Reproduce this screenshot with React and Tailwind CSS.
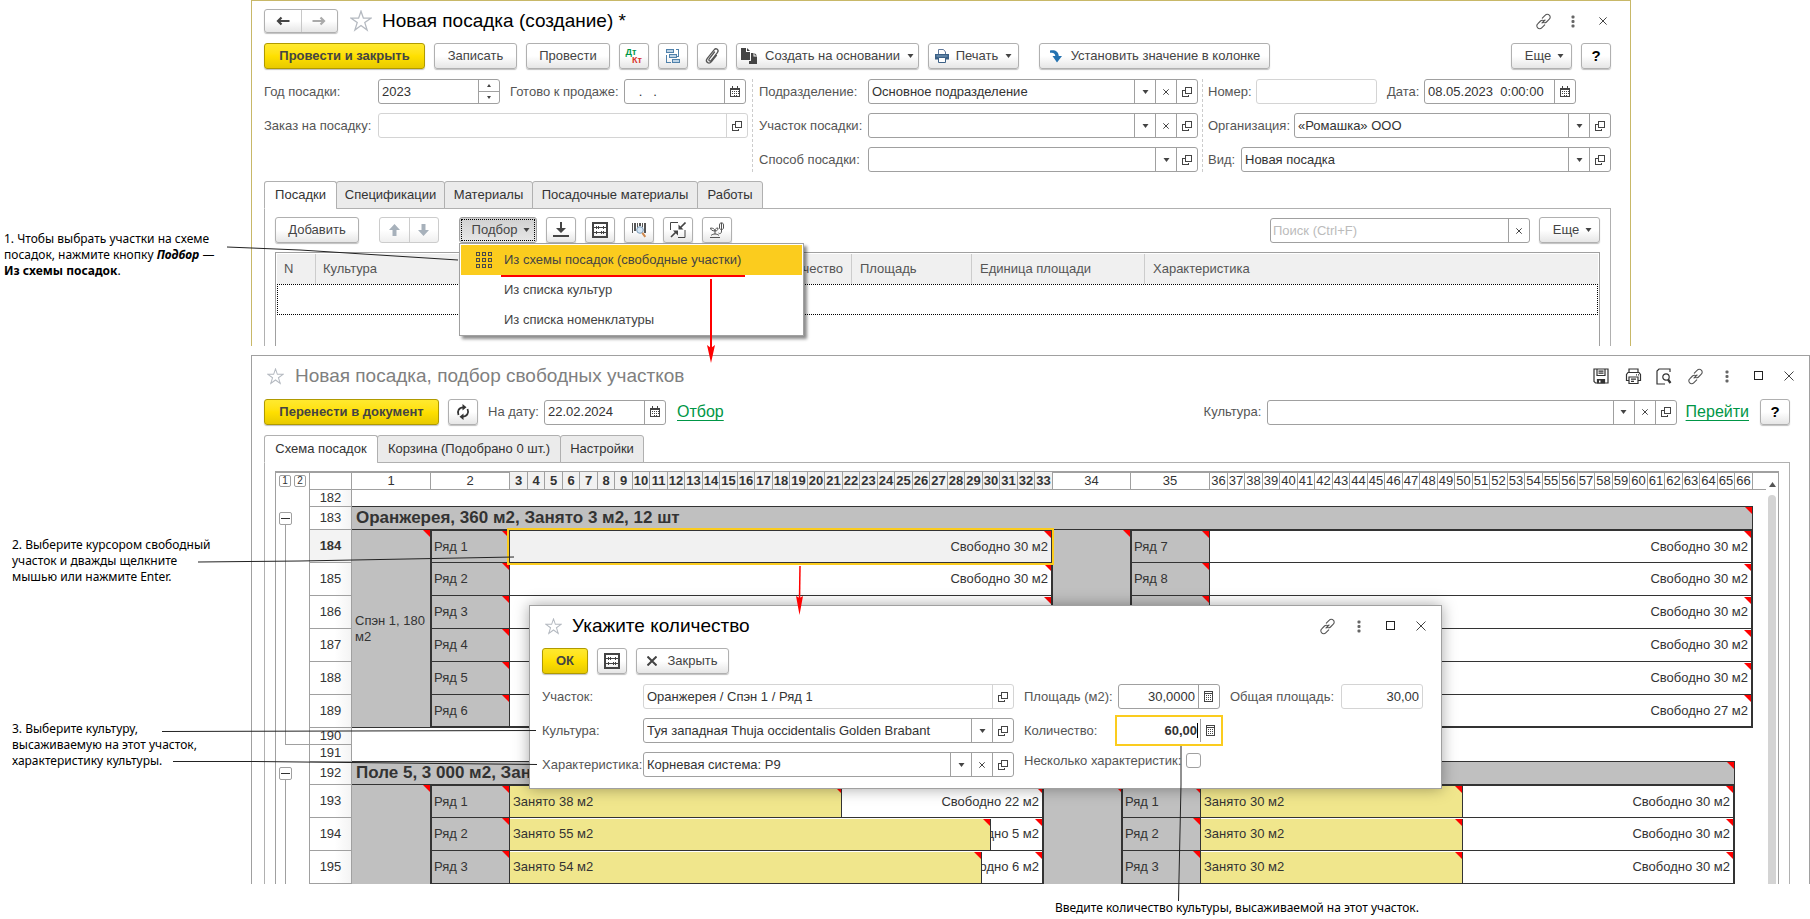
import { useState } from 'react'
import clsx from 'clsx'

/* ---------- icons ---------- */

function Caret({ className }) {
  return (
    <svg width="7" height="4" viewBox="0 0 7 4" className={className} aria-hidden="true">
      <path d="M0.5 0h6L3.5 4z" fill="currentColor" />
    </svg>
  )
}

function OpenIcon() {
  return (
    <svg width="12" height="12" viewBox="0 0 12 12" fill="none" stroke="#444" shapeRendering="crispEdges">
      <rect x="4.5" y="1.5" width="6" height="6" />
      <path d="M3.500 4.500H1.500v6h6V8.500" />
    </svg>
  )
}

function CalendarIcon() {
  return (
    <svg width="11" height="12" viewBox="0 0 11 12" shapeRendering="crispEdges">
      <rect x="0.5" y="2.5" width="9" height="8" fill="none" stroke="#444" />
      <path d="M0 2h10v2H0zM2 0h1v2H2zM7 0h1v2H7z" fill="#444" />
      <path d="M2 5h1v1H2zM4 5h1v1H4zM6 5h1v1H6zM8 5h1v1H8zM2 7h1v1H2zM4 7h1v1H4zM6 7h1v1H6zM8 7h1v1H8zM4 9h1v1H4zM6 9h1v1H6z" fill="#444" />
    </svg>
  )
}

function CalcIcon() {
  return (
    <svg width="11" height="12" viewBox="0 0 11 12" shapeRendering="crispEdges">
      <rect x="0.500" y="0.500" width="8" height="10" fill="none" stroke="#444" />
      <path d="M0 2h9v1H0zM2 4h1v1H2zM4 4h1v1H4zM6 4h1v1H6zM2 6h1v1H2zM4 6h1v1H4zM6 6h1v1H6zM2 8h1v1H2zM4 8h1v1H4zM6 8h1v1H6z" fill="#444" />
    </svg>
  )
}

function CrossIcon({ size = 6, width = 1 }) {
  return (
    <svg width={size} height={size} viewBox="0 0 10 10" stroke="#444" strokeWidth={(width * 10) / size}>
      <path d="M0.5 0.5l9 9M9.500 0.500l-9 9" />
    </svg>
  )
}

function StarIcon({ size = 20 }) {
  return (
    <svg width={size} height={size} viewBox="0 0 22 22" fill="none" stroke="#b4b9c0" strokeWidth="1.300">
      <path d="M11 1.200l2.400 7h7.400l-6 4.400 2.300 7.400-6.100-4.500-6.100 4.500 2.300-7.400-6-4.400h7.400z" />
    </svg>
  )
}

function LinkIcon() {
  return (
    <svg width="17" height="17" viewBox="0 0 17 17" fill="none" stroke="#555" strokeWidth="1.100" strokeLinecap="round">
      <path d="M7.300 5.200l3-3a2.700 2.700 0 0 1 4 0 2.700 2.700 0 0 1 0 4l-2.800 2.800a2.700 2.700 0 0 1-3 .5" />
      <path d="M9.700 11.800l-3 3a2.700 2.700 0 0 1-4 0 2.700 2.700 0 0 1 0-4l2.800-2.800a2.700 2.700 0 0 1 3-.5" />
      <path d="M7 10l3-3" />
    </svg>
  )
}

function DotsIcon() {
  return (
    <svg width="4" height="13" viewBox="0 0 4 13" fill="#666">
      <rect x="0.500" y="0.500" width="3" height="3" rx="1" />
      <rect x="0.500" y="5" width="3" height="3" rx="1" />
      <rect x="0.500" y="9.500" width="3" height="3" rx="1" />
    </svg>
  )
}

function SquareIcon() {
  return (
    <svg width="10" height="10" viewBox="0 0 10 10" shapeRendering="crispEdges">
      <rect x="0.500" y="0.500" width="8" height="8" fill="none" stroke="#222" />
    </svg>
  )
}

function SaveIcon() {
  return (
    <svg width="16" height="16" viewBox="0 0 16 16" fill="none" stroke="#333" strokeWidth="1.200">
      <path d="M1 1h14v14H2.500L1 13.500z" />
      <path d="M4 1v6.500h8V1M5.500 3.200h5M5.500 5.200h5" />
      <path d="M4.500 11.500h7V15h-7z" fill="#333" />
      <path d="M6 12.500h1.500v2H6z" fill="#fff" stroke="none" />
    </svg>
  )
}

function PrinterIcon() {
  return (
    <svg width="17" height="17" viewBox="0 0 17 17" fill="none" stroke="#333" strokeWidth="1.200">
      <path d="M4 4.500V1h9v3.500M4 12.500H1.500v-6l1.500-2h11l1.500 2v6H13" />
      <path d="M4 9h9v6.500H4zM6 11.200h5M6 13.300h3M11 6.800h1M13 6.800h1" />
    </svg>
  )
}

function PreviewIcon() {
  return (
    <svg width="16" height="17" viewBox="0 0 16 17" fill="none" stroke="#333" strokeWidth="1.200">
      <path d="M14 4V1H3L1 3v13h8" />
      <circle cx="10" cy="9" r="3.200" />
      <path d="M12 11.500l2.500 3.500" strokeWidth="2.200" />
    </svg>
  )
}

function ArrowIcon({ dir, color = '#444' }) {
  const turn = { left: 0, up: 90, right: 180, down: 270 }[dir]
  return (
    <svg width="14" height="12" viewBox="0 0 14 12">
      <path
        d="M5.500 2.500L2 6l3.500 3.500M2 6h11.500"
        fill="none"
        stroke={color}
        strokeWidth="2.200"
        transform={`rotate(${turn} 7 6)`}
      />
    </svg>
  )
}

function FatArrow({ down }) {
  return (
    <svg width="11" height="12" viewBox="0 0 11 12" fill="#a7b1bb">
      <path d={down ? 'M3.500 0h4v6H11L5.500 12 0 6h3.500z' : 'M5.500 0L11 6H7.500v6h-4V6H0z'} />
    </svg>
  )
}

function DtKtIcon() {
  return (
    <span className="flex flex-col text-[9px] leading-[8px] font-bold" aria-hidden="true">
      <span className="pr-1.5 text-[#009646]">Дт</span>
      <span className="pl-1.5 text-[#d8322c]">Кт</span>
    </span>
  )
}

function StructureIcon() {
  return (
    <svg width="16" height="16" viewBox="0 0 16 16" fill="#bcd3e6" stroke="#4f81ab" shapeRendering="crispEdges">
      <rect x="1.500" y="1.500" width="7" height="3" />
      <rect x="4.500" y="6.500" width="7" height="3" />
      <rect x="7.500" y="11.500" width="7" height="3" />
      <path d="M10.500 1.500h3v7M1.500 6.500v8h4M13.500 8.500h-2" fill="none" />
    </svg>
  )
}

function ClipIcon() {
  return (
    <svg width="16" height="18" viewBox="0 0 16 18" fill="none" stroke="#555" strokeWidth="1.300" strokeLinecap="round">
      <path d="M10.500 5L5.200 11.800c-1.200 1.600.8 3 2 1.600l6.200-7.800c2-2.600-1.200-5.200-3.300-2.700L3.300 11.300c-2.600 3.400 1.500 6.600 4.200 3.300l5-6.200" />
    </svg>
  )
}

function CopyIcon() {
  return (
    <svg width="17" height="16" viewBox="0 0 17 16" fill="#444">
      <path d="M0 0h5v4h4v8H0z" />
      <path d="M6 0l3 3H6z" />
      <path d="M10 5h2.500v3.500H16V16H8v-3h2z" />
      <path d="M13.500 5l2.500 2.500h-2.500z" />
    </svg>
  )
}

function PrintColorIcon() {
  return (
    <svg width="14" height="14" viewBox="0 0 14 14">
      <path d="M3.500 5V0.500h5L10.500 3v2" fill="#fff" stroke="#60789a" />
      <path d="M0 5h14v5.500H0z" fill="#3c6186" />
      <path d="M1.500 6.500h11v1h-11z" fill="#83a6c6" />
      <path d="M3.500 8.500h7v5h-7z" fill="#fff" stroke="#3c6186" />
    </svg>
  )
}

function TurnIcon() {
  return (
    <svg width="14" height="14" viewBox="0 0 14 14">
      <path d="M1 1.500C5.500.5 9.500 2 9.800 7H13L8 13.500 3.500 7h2.800C6.200 4.500 4.500 3.200 1 3.800z" fill="#2472b0" />
    </svg>
  )
}

function DownloadIcon() {
  return (
    <svg width="16" height="16" viewBox="0 0 16 16" fill="#444">
      <path d="M7 0h2v6h4l-5 5-5-5h4zM0 13h16v2H0z" />
    </svg>
  )
}

function AbacusIcon() {
  return (
    <svg width="16" height="16" viewBox="0 0 16 16" shapeRendering="crispEdges">
      <rect x="1" y="1" width="14" height="14" fill="none" stroke="#444" strokeWidth="2" />
      <path d="M2 5h12v1H2zM2 10h12v1H2zM4 4h1v3H4zM6 4h1v3H6zM11 4h1v3h-1zM4 9h1v3H4zM9 9h1v3H9zM11 9h1v3h-1z" fill="#444" />
    </svg>
  )
}

function BarcodeIcon() {
  return (
    <svg width="16" height="16" viewBox="0 0 16 16">
      <path d="M1 1h1v10H1zM3 1h2v8H3zM6 1h1v5H6zM8 1h2v3H8zM11 1h1v4h-1zM13 1h2v10h-2z" fill="#555" shapeRendering="crispEdges" />
      <circle cx="9" cy="8" r="3.300" fill="#d5e6f5" stroke="#7d9db8" />
      <path d="M11.300 10.800l3 4" stroke="#d08a4e" strokeWidth="2" />
    </svg>
  )
}

function CollapseIcon() {
  return (
    <svg width="16" height="16" viewBox="0 0 16 16" fill="none" stroke="#444">
      <path d="M8 0.500H0.500V8M8 15.500h7V8" />
      <path d="M15.500 0.500L10 6M1 15l5.500-5.500" strokeWidth="1.600" />
      <path d="M8.500 2.500v5h5zM3 8.500h5v5z" fill="#444" stroke="none" />
    </svg>
  )
}

function PlantIcon() {
  return (
    <svg width="16" height="16" viewBox="0 0 16 16" fill="none" stroke="#555">
      <path d="M1 15.500h10M2 13.500c2-2 6-2 8 0M6 12V9M6 9C3 9 1.500 7.500 1.500 6 4 6 6 7 6 9zM6 9c0-2 1-3 3-3 0 2-1 3-3 3zM12.500 9V1" />
      <path d="M10.500 6V3c0-3 4-3 4 0v3c0 2-4 2-4 0zM12.500 9c0 3-2 3-3 2" />
    </svg>
  )
}

function GridIcon() {
  const cells = [1, 7, 13]
  return (
    <svg width="17" height="17" viewBox="0 0 17 17" fill="none" stroke="#4a4a4a" shapeRendering="crispEdges">
      {cells.map(y => cells.map(x => (
        <rect key={`${x}-${y}`} x={x - 0.5} y={y - 0.5} width="3" height="3" />
      )))}
    </svg>
  )
}

function RefreshIcon() {
  return (
    <svg width="14" height="16" viewBox="0 0 14 16" fill="none" stroke="#333" strokeWidth="1.800">
      <path d="M2.500 11C.8 7 3 3.300 7.500 3.300M11.500 5c1.700 4-.5 7.700-5 7.700" />
      <path d="M6.500 0l4 3.300-4 3.300zM7.500 9.400l-4 3.300 4 3.300z" fill="#333" stroke="none" />
    </svg>
  )
}

/* ---------- controls ---------- */

function Btn({ className, primary, children, ...rest }) {
  return (
    <button
      type="button"
      className={clsx(
        'flex h-[26px] shrink-0 items-center justify-center rounded-[3px] border whitespace-nowrap shadow-[0_1px_1px_rgba(0,0,0,0.25)]',
        primary
          ? 'border-[#b09a00] bg-linear-to-b from-[#ffe92e] via-[#ffe000] to-[#e8ca00] font-bold text-[#444]'
          : 'border-[#b0b0b0] bg-linear-to-b from-white from-50% to-[#e6e6e6] text-[#444]',
        className,
      )}
      {...rest}
    >
      {children}
    </button>
  )
}

const ADDONS = {
  list: { label: 'Выбрать из списка', icon: <Caret /> },
  clear: { label: 'Очистить', icon: <CrossIcon /> },
  open: { label: 'Открыть', icon: <OpenIcon /> },
  date: { label: 'Календарь', icon: <CalendarIcon /> },
  calc: { label: 'Калькулятор', icon: <CalcIcon /> },
}

function Field({ id, label, labelClass, value = '', addons = [], disabled, boxClass, inputClass, focused, children }) {
  const [text, setText] = useState(value)
  const line = disabled ? 'border-[#d4d4d4]' : 'border-[#a0a0a0]'
  return (
    <div className="flex h-[25px] w-full min-w-0 items-center">
      <label htmlFor={id} className={clsx('shrink-0 whitespace-nowrap text-[#555]', labelClass)}>{label}</label>
      <div
        className={clsx(
          'flex min-w-0 items-stretch bg-white',
          focused ? 'h-[31px] border-2 border-[#fbcc1e] py-0.5' : ['h-[25px] rounded-[3px] border', line],
          boxClass || 'flex-1',
        )}
      >
        <input
          id={id}
          value={text}
          readOnly={disabled}
          onChange={e => setText(e.target.value)}
          className={clsx('w-full min-w-0 flex-1 bg-transparent px-[3px] text-[#333] outline-none', inputClass)}
        />
        {focused && <span className="w-px self-center bg-black h-[15px]" />}
        {focused && <span className="w-0.5" />}
        {addons.map(a => (
          <button
            key={a}
            type="button"
            aria-label={ADDONS[a].label}
            className={clsx('flex w-[21px] shrink-0 items-center justify-center border-l text-[#444]', line)}
          >
            {ADDONS[a].icon}
          </button>
        ))}
        {children}
      </div>
    </div>
  )
}

function Tabs({ items }) {
  return (
    <div role="tablist" className="relative -mb-px flex">
      {items.map(([name, width], i) => (
        <button
          key={name}
          type="button"
          role="tab"
          aria-selected={i === 0}
          className={clsx(
            'h-[28px] rounded-t-[3px] border border-[#b0b0b0] text-center whitespace-nowrap text-[#333]',
            i === 0 ? 'border-b-white bg-white' : '-ml-px bg-[#ebebeb]',
            width,
          )}
        >
          {name}
        </button>
      ))}
    </div>
  )
}

function IconButton({ label, children, className }) {
  return (
    <button type="button" aria-label={label} className={clsx('flex h-5 items-center justify-center', className)}>
      {children}
    </button>
  )
}

/* ---------- document form ---------- */

function PickMenu() {
  const items = ['Из схемы посадок (свободные участки)', 'Из списка культур', 'Из списка номенклатуры']
  return (
    <div
      role="menu"
      className="absolute top-[26px] left-0 z-20 w-[345px] border border-[#a0a0a0] bg-white px-px pt-px shadow-[3px_3px_3px_rgba(0,0,0,0.45)]"
    >
      {items.map((item, i) => (
        <button
          key={item}
          type="button"
          role="menuitem"
          className={clsx(
            'flex h-[30px] w-full items-center text-left whitespace-nowrap text-[#444]',
            i === 0 && 'bg-[#fbcc1e]',
          )}
        >
          <span className="flex w-[43px] justify-center pl-1">{i === 0 && <GridIcon />}</span>
          {item}
        </button>
      ))}
    </div>
  )
}

function DocumentWindow() {
  return (
    <section className="mr-[179px] min-w-0 flex-1 border border-b-0 border-[#c8b868] bg-white pt-2 pr-[19px] pl-3">
      <header className="flex h-6 items-center">
        <div className="flex h-6 w-[74px] rounded-[3px] border border-[#b0b0b0] bg-linear-to-b from-white from-50% to-[#e6e6e6] shadow-[0_1px_1px_rgba(0,0,0,0.25)]">
          <button type="button" aria-label="Назад" className="flex flex-1 items-center justify-center">
            <ArrowIcon dir="left" />
          </button>
          <button type="button" aria-label="Вперед" className="flex flex-1 items-center justify-center border-l border-[#c8c8c8]">
            <ArrowIcon dir="right" color="#aaa" />
          </button>
        </div>
        <IconButton label="В избранное" className="ml-3"><StarIcon size={22} /></IconButton>
        <h1 className="ml-2.5 text-[19px] leading-6 text-black">Новая посадка (создание) *</h1>
        <IconButton label="Ссылка" className="ml-auto w-5"><LinkIcon /></IconButton>
        <IconButton label="Меню" className="ml-3 w-4"><DotsIcon /></IconButton>
        <IconButton label="Закрыть" className="ml-3.5 w-4"><CrossIcon size={8} /></IconButton>
      </header>

      <div className="mt-2.5 flex">
        <Btn primary className="w-[161px]">Провести и закрыть</Btn>
        <Btn className="ml-[9px] w-[83px]">Записать</Btn>
        <Btn className="ml-[9px] w-[84px]">Провести</Btn>
        <Btn className="ml-[9px] w-[30px]" aria-label="Проводки"><DtKtIcon /></Btn>
        <Btn className="ml-[9px] w-[30px]" aria-label="Структура"><StructureIcon /></Btn>
        <Btn className="ml-[9px] w-[30px]" aria-label="Файлы"><ClipIcon /></Btn>
        <Btn className="ml-[9px] w-[183px] gap-[7px]"><CopyIcon />Создать на основании<Caret /></Btn>
        <Btn className="ml-[9px] w-[91px] gap-[7px]"><PrintColorIcon />Печать<Caret /></Btn>
        <Btn className="ml-5 w-[231px] gap-2"><TurnIcon />Установить значение в колонке</Btn>
        <Btn className="ml-auto w-[61px] gap-1.5 pl-1.5">Еще<Caret /></Btn>
        <Btn className="ml-[9px] w-[30px] text-[15px] font-bold text-black">?</Btn>
      </div>

      <div className="mt-2.5 grid grid-cols-[484fr_446fr_409fr] gap-x-1">
        <div className="flex flex-col gap-[9px]">
          <div className="flex">
            <div className="flex w-[236px]">
              <Field id="year" label="Год посадки:" labelClass="w-[114px]" value="2023">
                <span className="flex w-[21px] shrink-0 flex-col border-l border-[#a0a0a0]">
                  <button type="button" aria-label="Больше" className="flex flex-1 items-center justify-center">
                    <svg width="4" height="3"><path d="M2 0l2 3H0z" fill="#444" /></svg>
                  </button>
                  <button type="button" aria-label="Меньше" className="flex flex-1 items-center justify-center border-t border-[#a0a0a0]">
                    <svg width="4" height="3"><path d="M0 0h4L2 3z" fill="#444" /></svg>
                  </button>
                </span>
              </Field>
            </div>
            <div className="ml-2.5 flex w-[236px]">
              <Field id="ready" label="Готово к продаже:" labelClass="w-[114px]" value="   .   ." addons={['date']} />
            </div>
          </div>
          <Field id="order" label="Заказ на посадку:" labelClass="w-[114px]" addons={['open']} disabled />
        </div>
        <div className="flex flex-col gap-[9px] border-l border-dashed border-[#ccc] pl-1.5">
          <Field id="dept" label="Подразделение:" labelClass="w-[109px]" value="Основное подразделение" addons={['list', 'clear', 'open']} />
          <Field id="plot" label="Участок посадки:" labelClass="w-[109px]" addons={['list', 'clear', 'open']} />
          <Field id="way" label="Способ посадки:" labelClass="w-[109px]" addons={['list', 'open']} />
        </div>
        <div className="flex flex-col gap-[9px] border-l border-dashed border-[#ccc] pl-[5px]">
          <div className="flex">
            <div className="flex w-[169px]">
              <Field id="number" label="Номер:" labelClass="w-[48px]" disabled />
            </div>
            <div className="ml-2.5 flex w-[189px]">
              <Field id="date" label="Дата:" labelClass="w-[37px]" value="08.05.2023  0:00:00" inputClass="whitespace-pre" addons={['date']} />
            </div>
          </div>
          <Field id="org" label="Организация:" labelClass="w-[86px]" value="«Ромашка» ООО" addons={['list', 'open']} />
          <Field id="kind" label="Вид:" labelClass="w-[33px]" value="Новая посадка" addons={['list', 'open']} />
        </div>
      </div>

      <div className="mt-[9px]">
        <Tabs
          items={[
            ['Посадки', 'w-[73px]'],
            ['Спецификации', 'w-[109px]'],
            ['Материалы', 'w-[89px]'],
            ['Посадочные материалы', 'w-[166px]'],
            ['Работы', 'w-[66px]'],
          ]}
        />
      </div>
      <div className="border border-b-0 border-[#b0b0b0] px-2.5 pt-2">
        <div className="flex">
          <Btn className="w-[84px]">Добавить</Btn>
          <div className="ml-5 flex h-[26px] w-[60px] rounded-[3px] border border-[#ccc] bg-linear-to-b from-white from-50% to-[#efefef]">
            <button type="button" aria-label="Вверх" className="flex flex-1 items-center justify-center"><FatArrow /></button>
            <button type="button" aria-label="Вниз" className="flex flex-1 items-center justify-center border-l border-[#ccc]"><FatArrow down /></button>
          </div>
          <div className="relative ml-5">
            <button
              type="button"
              aria-haspopup="menu"
              aria-expanded="true"
              className="flex h-[26px] w-[78px] rounded-[3px] border border-[#a0a0a0] bg-linear-to-b from-[#d0d0d0] to-[#e8e8e8] p-px text-[#444]"
            >
              <span className="flex h-full flex-1 items-center justify-center gap-1.5 border border-dotted border-black pl-1.5">
                Подбор<Caret />
              </span>
            </button>
            <PickMenu />
          </div>
          <Btn className="ml-[9px] w-[30px]" aria-label="Загрузить"><DownloadIcon /></Btn>
          <Btn className="ml-[9px] w-[30px]" aria-label="Рассчитать"><AbacusIcon /></Btn>
          <Btn className="ml-[9px] w-[30px]" aria-label="Штрихкод"><BarcodeIcon /></Btn>
          <Btn className="ml-[9px] w-[30px]" aria-label="Свернуть"><CollapseIcon /></Btn>
          <Btn className="ml-[9px] w-[30px]" aria-label="Растения"><PlantIcon /></Btn>
          <div className="ml-auto flex h-[25px] w-[260px] self-end rounded-[3px] border border-[#a0a0a0]">
            <input
              type="text"
              aria-label="Поиск"
              placeholder="Поиск (Ctrl+F)"
              className="min-w-0 flex-1 px-0.5 outline-none placeholder:text-[#bbb]"
            />
            <button type="button" aria-label="Очистить поиск" className="flex w-[21px] items-center justify-center border-l border-[#a0a0a0]">
              <CrossIcon />
            </button>
          </div>
          <Btn className="ml-[9px] w-[61px] gap-1.5 pl-1.5">Еще<Caret /></Btn>
        </div>

        <div className="mt-[9px] h-[94px] border border-b-0 border-[#a0a0a0] p-px pb-0">
          <table className="w-full table-fixed border-separate border-spacing-0 text-left text-[#555]">
            <thead>
              <tr className="h-[30px] bg-[#f0f0f0]">
                <th className="w-[39px] border-r border-[#ccc] px-[7px] font-normal">N</th>
                <th className="w-[449px] border-r border-[#ccc] px-[7px] font-normal">Культура</th>
                <th className="w-[87px] border-r border-[#ccc] pr-2 text-right font-normal">Количество</th>
                <th className="w-[120px] border-r border-[#ccc] px-2 font-normal">Площадь</th>
                <th className="w-[173px] border-r border-[#ccc] px-2 font-normal">Единица площади</th>
                <th className="px-2 font-normal">Характеристика</th>
              </tr>
            </thead>
            <tbody>
              <tr className="h-[31px]">
                <td colSpan={6} className="border border-dotted border-black" />
              </tr>
            </tbody>
          </table>
        </div>
      </div>
    </section>
  )
}

/* ---------- planting scheme ---------- */

function Corner() {
  return (
    <svg width="7" height="7" viewBox="0 0 7 7" className="absolute top-0 right-0" aria-hidden="true">
      <path d="M0 0h7v7z" fill="#f00" />
    </svg>
  )
}

function RowNumber({ children, active }) {
  return (
    <th
      className={clsx(
        'w-[42px] border-r border-b border-[#a0a0a0] p-0 text-center text-[#333]',
        active ? 'bg-[#f3f3f3] font-bold' : 'bg-linear-to-r from-white from-60% to-[#f4f4f4] font-normal',
      )}
    >
      {children}
    </th>
  )
}

const NARROW = n => Array.from({ length: 31 }, (_, i) => n + i)

function SheetHeader() {
  const th = 'h-[18px] border-r border-b border-[#a0a0a0] p-0 text-center leading-4 text-[#333]'
  return (
    <table className="w-[1456px] table-fixed border-separate border-spacing-0">
      <thead>
        <tr>
          <th className={clsx(th, 'w-[42px]')} />
          <th className={clsx(th, 'w-[79px] font-normal')}>1</th>
          <th className={clsx(th, 'w-[79px] font-normal')}>2</th>
          {NARROW(3).map((n, i) => (
            <th key={n} className={clsx(th, 'bg-[#f1f1f1] font-bold', i % 2 ? 'w-[17px]' : 'w-[18px]')}>{n}</th>
          ))}
          <th className={clsx(th, 'w-[78px] font-normal')}>34</th>
          <th className={clsx(th, 'w-[79px] font-normal')}>35</th>
          {NARROW(36).map((n, i) => (
            <th key={n} className={clsx(th, 'font-normal', i % 2 ? 'w-[17px]' : 'w-[18px]')}>{n}</th>
          ))}
          <th className="border-b border-[#a0a0a0]" />
        </tr>
      </thead>
    </table>
  )
}

function EmptyRow({ n, last }) {
  return (
    <tr className="h-[17px] leading-4">
      <RowNumber>{n}</RowNumber>
      <td colSpan={6} className={clsx('p-0', last && 'border-b border-[#333]')} />
      <td />
    </tr>
  )
}

// taken - width of the occupied strip in px, absent when the whole bed is free
function Bed({ bed, first, last, selected }) {
  return (
    <td
      className={clsx(
        'relative border-r-2 border-[#333] p-0',
        first && 'border-t',
        last ? 'border-b-2' : 'border-b',
        selected && 'bg-[#f1f1f1]',
      )}
    >
      <div className="flex h-[31px] items-stretch">
        {bed.taken && (
          <div
            className="relative flex shrink-0 items-center border-r border-[#333] bg-[#f0e68c] pl-[3px]"
            style={{ width: bed.taken }}
          >
            {bed.takenText}
            <Corner />
          </div>
        )}
        <div className="relative flex min-w-0 flex-1 items-center justify-end overflow-hidden pr-[3px] whitespace-nowrap">
          {bed.free}
          <Corner />
        </div>
      </div>
      {selected && <span className="pointer-events-none absolute -inset-[3px] z-10 border-2 border-[#fbcc1e]" />}
    </td>
  )
}

function Section({ title, titleRow, group, rows, blockWidth, head, tail, selectedRow, clipped }) {
  return (
    <table className="w-[1456px] table-fixed border-separate border-spacing-0 text-[#333]">
      <colgroup>
        <col className="w-[42px]" />
        <col className="w-[79px]" />
        <col className="w-[79px]" />
        <col className={blockWidth} />
        <col className="w-[78px]" />
        <col className="w-[79px]" />
        <col className={blockWidth} />
        <col />
      </colgroup>
      <tbody>
        {head.map((n, i) => <EmptyRow key={n} n={n} last={i === head.length - 1} />)}
        <tr className="h-[23px]">
          <RowNumber>{titleRow}</RowNumber>
          <td colSpan={6} className="relative border-r border-b border-[#333] bg-[#c0c0c0] py-0 pl-1 text-[17px] leading-[22px] font-bold whitespace-nowrap">
            {title}
            <Corner />
          </td>
          <td />
        </tr>
        {rows.map((r, i) => {
          const first = i === 0
          const last = i === rows.length - 1 && !clipped
          const cell = clsx(
            'relative border-l border-r border-[#333] bg-[#c0c0c0] py-0 pl-0.5',
            first && 'border-t',
            last ? 'border-b-2' : 'border-b',
          )
          return (
            <tr key={r.n} className="h-[33px]">
              <RowNumber active={r.n === selectedRow}>{r.n}</RowNumber>
              {first && (
                <td rowSpan={rows.length} className={clsx('relative border-r border-[#333] bg-[#c0c0c0] py-0 pr-1 pl-[3px] leading-4', !clipped && 'border-b')}>
                  {group}
                  <Corner />
                </td>
              )}
              <td className={cell}>{r.left}<Corner /></td>
              <Bed bed={r.leftBed} first={first} last={last} selected={r.n === selectedRow} />
              {first && (
                <td rowSpan={rows.length} className={clsx('relative border-r border-[#333] bg-[#c0c0c0]', !clipped && 'border-b')}>
                  <Corner />
                </td>
              )}
              <td className={cell}>{r.right}<Corner /></td>
              <Bed bed={r.rightBed} first={first} last={last} />
              <td />
            </tr>
          )
        })}
        {tail.map(n => <EmptyRow key={n} n={n} />)}
      </tbody>
    </table>
  )
}

const FREE_30 = { free: 'Свободно 30 м2' }

const GREENHOUSE = [1, 2, 3, 4, 5, 6].map(i => ({
  n: 183 + i,
  left: `Ряд ${i}`,
  leftBed: FREE_30,
  right: `Ряд ${i + 6}`,
  rightBed: i === 6 ? { free: 'Свободно 27 м2' } : FREE_30,
}))

const FIELD_5 = [
  { n: 193, left: 'Ряд 1', leftBed: { taken: 332, takenText: 'Занято 38 м2', free: 'Свободно 22 м2' } },
  { n: 194, left: 'Ряд 2', leftBed: { taken: 481, takenText: 'Занято 55 м2', free: 'Свободно 5 м2' } },
  { n: 195, left: 'Ряд 3', leftBed: { taken: 472, takenText: 'Занято 54 м2', free: 'Свободно 6 м2' } },
].map(r => ({ ...r, right: r.left, rightBed: { taken: 262, takenText: 'Занято 30 м2', free: 'Свободно 30 м2' } }))

function Toggle() {
  return (
    <button type="button" aria-label="Свернуть группу" className="flex h-[13px] w-[13px] items-center justify-center rounded-[2px] border border-[#a0a0a0]">
      <span className="h-px w-[9px] bg-[#333]" />
    </button>
  )
}

function Sheet() {
  return (
    <div className="flex overflow-hidden border border-b-0 border-[#a0a0a0] shadow-[inset_0_1px_0_#a0a0a0]">
      <div className="flex w-[34px] shrink-0 flex-col border-r border-[#a0a0a0] pl-[3px]">
        <div className="flex h-[18px] items-center gap-[3px]">
          {[1, 2].map(n => (
            <button key={n} type="button" className="flex h-3 w-3 items-center justify-center rounded-[2px] border border-[#a0a0a0] text-[10px] leading-none text-[#333]">
              {n}
            </button>
          ))}
        </div>
        <div className="mt-[22px]"><Toggle /></div>
        <div className="ml-1.5 h-[220px] border-b border-l border-[#a0a0a0]" />
        <div className="mt-[22px]"><Toggle /></div>
        <div className="ml-1.5 flex-1 border-l border-[#a0a0a0]" />
      </div>
      <div className="min-w-0 flex-1">
        <SheetHeader />
        <Section
          title="Оранжерея, 360 м2, Занято 3 м2, 12 шт"
          titleRow={183}
          group="Спэн 1, 180 м2"
          rows={GREENHOUSE}
          blockWidth="w-[543px]"
          head={[182]}
          tail={[190]}
          selectedRow={184}
        />
        <Section
          title="Поле 5, 3 000 м2, Зан"
          titleRow={192}
          rows={FIELD_5}
          blockWidth="w-[534px]"
          head={[191]}
          tail={[]}
          clipped
        />
      </div>
      <div className="flex w-3 shrink-0 flex-col items-center pt-2.5">
        <svg width="7" height="5" viewBox="0 0 7 5"><path d="M3.500 0L7 5H0z" fill="#555" /></svg>
        <div className="mt-2 w-2 flex-1 rounded-t-full bg-[#d4d4d4]" />
      </div>
    </div>
  )
}

function QuantityDialog() {
  return (
    <div
      role="dialog"
      aria-label="Укажите количество"
      className="absolute top-[249px] left-[277px] z-20 w-[913px] border border-[#a0a0a0] bg-white pr-[11px] pb-[11px] pl-3 shadow-[0_0_14px_rgba(0,0,0,0.35)]"
    >
      <header className="mb-0.5 flex h-10 items-center">
        <IconButton label="В избранное" className="ml-[3px]"><StarIcon size={17} /></IconButton>
        <h2 className="ml-2.5 text-[19px] leading-6 text-black">Укажите количество</h2>
        <IconButton label="Ссылка" className="ml-auto w-5"><LinkIcon /></IconButton>
        <IconButton label="Меню" className="ml-3.5 w-4"><DotsIcon /></IconButton>
        <IconButton label="Развернуть" className="ml-4 w-4"><SquareIcon /></IconButton>
        <IconButton label="Закрыть окно" className="mr-px ml-3.5 w-4"><CrossIcon size={10} /></IconButton>
      </header>
      <div className="flex gap-[9px]">
        <Btn primary className="w-[46px]">ОК</Btn>
        <Btn className="w-[30px]" aria-label="Рассчитать"><AbacusIcon /></Btn>
        <Btn className="w-[93px] gap-2.5"><CrossIcon size={10} width={2} />Закрыть</Btn>
      </div>
      <div className="mt-2.5 flex gap-2.5">
        <div className="flex w-[472px] flex-col gap-[9px]">
          <Field id="q-plot" label="Участок:" labelClass="w-[101px]" value="Оранжерея / Спэн 1 / Ряд 1" addons={['open']} disabled />
          <Field id="q-culture" label="Культура:" labelClass="w-[101px]" value="Туя западная Thuja occidentalis Golden Brabant" addons={['list', 'open']} />
          <Field id="q-feature" label="Характеристика:" labelClass="w-[101px]" value="Корневая система: P9" addons={['list', 'clear', 'open']} />
        </div>
        <div className="flex flex-1 flex-col gap-[9px]">
          <div className="flex gap-2.5">
            <div className="flex w-[196px]">
              <Field id="q-area" label="Площадь (м2):" labelClass="w-[94px]" value="30,0000" inputClass="text-right" addons={['calc']} />
            </div>
            <div className="flex w-[193px]">
              <Field id="q-total" label="Общая площадь:" labelClass="w-[111px]" value="30,00" inputClass="text-right" disabled />
            </div>
          </div>
          <Field
            id="q-count"
            label="Количество:"
            labelClass="w-[91px]"
            value="60,00"
            boxClass="w-[108px]"
            inputClass="pr-0 text-right font-bold"
            addons={['calc']}
            focused
          />
          <div className="flex h-[17px] items-center">
            <label htmlFor="q-many" className="w-[162px] whitespace-nowrap text-[#555]">Несколько характеристик:</label>
            <input id="q-many" type="checkbox" className="h-[15px] w-[15px] appearance-none rounded-[3px] border border-[#a0a0a0] bg-white" />
          </div>
        </div>
      </div>
    </div>
  )
}

function SchemeWindow() {
  return (
    <section className="relative min-w-0 flex-1 border border-b-0 border-[#a0a0a0] bg-white px-3">
      <header className="flex h-10 items-center">
        <IconButton label="В избранное" className="ml-[3px]"><StarIcon size={17} /></IconButton>
        <h2 className="ml-[11px] text-[19px] leading-6 text-[#808080]">Новая посадка, подбор свободных участков</h2>
        <IconButton label="Сохранить" className="ml-auto w-5"><SaveIcon /></IconButton>
        <IconButton label="Печать" className="ml-3 w-5"><PrinterIcon /></IconButton>
        <IconButton label="Просмотр" className="ml-[11px] w-5"><PreviewIcon /></IconButton>
        <IconButton label="Ссылка" className="ml-[11px] w-5"><LinkIcon /></IconButton>
        <IconButton label="Меню" className="ml-3.5 w-4"><DotsIcon /></IconButton>
        <IconButton label="Развернуть" className="ml-4 w-4"><SquareIcon /></IconButton>
        <IconButton label="Закрыть" className="ml-3.5 w-4"><CrossIcon size={10} /></IconButton>
      </header>
      <div className="mt-[3px] flex items-center pr-[7px]">
        <Btn primary className="w-[175px]">Перенести в документ</Btn>
        <Btn className="ml-[9px] w-[30px]" aria-label="Обновить"><RefreshIcon /></Btn>
        <div className="ml-2.5 flex w-[178px]">
          <Field id="on-date" label="На дату:" labelClass="w-[56px]" value="22.02.2024" addons={['date']} />
        </div>
        <a href="#filter" className="ml-[11px] text-[16px] leading-5 text-[#009646] underline underline-offset-3">Отбор</a>
        <div className="ml-auto flex w-[473px]">
          <Field id="culture" label="Культура:" labelClass="w-[63px]" addons={['list', 'clear', 'open']} />
        </div>
        <a href="#go" className="ml-[9px] text-[16px] leading-5 text-[#009646] underline underline-offset-3">Перейти</a>
        <Btn className="ml-[11px] w-[30px] text-[15px] font-bold text-black">?</Btn>
      </div>
      <div className="mt-2.5 pr-[7px]">
        <Tabs
          items={[
            ['Схема посадок', 'w-[114px]'],
            ['Корзина (Подобрано 0 шт.)', 'w-[184px]'],
            ['Настройки', 'w-[84px]'],
          ]}
        />
        <div className="border border-b-0 border-[#b0b0b0] px-2.5 pt-2">
          <Sheet />
        </div>
      </div>
      <QuantityDialog />
    </section>
  )
}

/* ---------- callout lines over both windows ---------- */

function Callouts() {
  return (
    <svg width="1810" height="919" viewBox="0 0 1810 919" className="pointer-events-none absolute top-0 left-0 z-30" aria-hidden="true">
      <g stroke="#222" fill="none">
        <path d="M227 247L300 250L458 260" />
        <path d="M198 562L300 561L514 557" />
        <path d="M162 731.500L536 730.500" />
        <path d="M173 761.500H255L537 764.500" />
        <path d="M1181 746L1181 785L1178.500 901" />
      </g>
      <g stroke="#f00" fill="#f00">
        <path d="M501 276H745" strokeWidth="2" />
        <path d="M711 279V350" strokeWidth="2" />
        <path d="M707 345L711 348L715 345L711 363z" stroke="none" />
        <path d="M800 566L799.500 600" strokeWidth="1.500" />
        <path d="M796 596L799.500 598L803 596L799.500 615z" stroke="none" />
      </g>
    </svg>
  )
}

export default function App() {
  return (
    <main className="relative min-h-screen overflow-hidden bg-white font-['Liberation_Sans',Arial,sans-serif] text-[13px] leading-4">
      <div className="flex">
        <aside className="w-[251px] shrink-0 pt-[231px] pl-1 font-['Noto_Sans',sans-serif] text-[12px] text-black">
          <p>
            1. Чтобы выбрать участки на схеме<br />
            посадок, нажмите кнопку <b><i>Подбор</i></b> —<br />
            <b>Из схемы посадок</b>.
          </p>
        </aside>
        <DocumentWindow />
      </div>

      <div className="mt-[9px] flex">
        <aside className="w-[251px] shrink-0 pt-[182px] pl-3 font-['Noto_Sans',sans-serif] text-[12px] text-black">
          <p>
            2. Выберите курсором свободный<br />
            участок и дважды щелкните<br />
            мышью или нажмите Enter.
          </p>
          <p className="mt-[136px]">
            3. Выберите культуру,<br />
            высаживаемую на этот участок,<br />
            характеристику культуры.
          </p>
        </aside>
        <SchemeWindow />
      </div>

      <p className="mt-4 pl-[1055px] font-['Noto_Sans',sans-serif] text-[12px] whitespace-nowrap text-black">
        Введите количество культуры, высаживаемой на этот участок.
      </p>
      <Callouts />
    </main>
  )
}
